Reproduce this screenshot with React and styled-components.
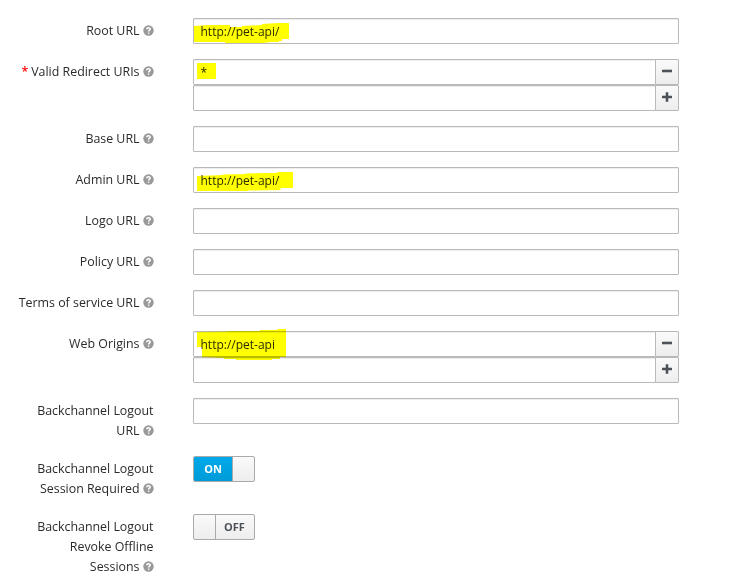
import React from "react";
import styled, { createGlobalStyle, css } from "styled-components";

const Global = createGlobalStyle`
  *, *::before, *::after { box-sizing: border-box; }
  body {
    margin: 0;
    background: #fff;
    color: #2b2b2b;
    font: 12px/20px "Open Sans", "Noto Sans", sans-serif;
    overflow: hidden;
  }
`;

const Form = styled.form`
  display: flex;
  flex-direction: column;
  gap: 15px;
  width: 756px;
  height: 583px;
  padding-top: 18px;
  overflow: hidden;
`;

const Row = styled.div`
  display: grid;
  grid-template-columns: 153.5px 486px;
  column-gap: 39.5px;
  align-items: start;
`;

const Label = styled.label`
  display: flex;
  flex-direction: column;
  align-items: flex-end;
  padding-top: 3px;
  white-space: nowrap;
`;

const Line = styled.span`
  display: flex;
  align-items: center;
  height: 20px;
  font-size: 12.4px;
`;

const Star = styled.span`
  color: #f00;
  font-weight: 600;
  margin-right: 3px;
`;

const Help = styled.svg`
  width: 11px;
  height: 11px;
  margin: 0 0 1px 3px;
`;

const Group = styled.div`
  display: flex;
  height: 26px;
`;

const Field = styled.div`
  position: relative;
  flex: 1;
  height: 26px;
  padding: 3px 7px 0 6.5px;
  border: 1px solid #bababa;
  border-radius: ${(p) => (p.$joined ? "1px 0 0 1px" : "1px")};
  background: #fff;
  box-shadow: inset 0 1px 1px rgba(3, 3, 3, 0.075);
`;

const Marker = styled.svg`
  position: absolute;
  left: -1px;
  top: -6px;
  width: 110px;
  height: 38px;
  mix-blend-mode: multiply;
  pointer-events: none;
  z-index: 1;
`;

const SideButton = styled.button`
  display: flex;
  align-items: center;
  justify-content: center;
  width: 24px;
  height: 26px;
  margin-left: -1px;
  padding: 0 0 2px;
  border: 1px solid #b7b7b7;
  border-radius: 0 1px 1px 0;
  background: linear-gradient(#fafafa, #ededed);
  color: #4d5258;
`;

const Switch = styled.div`
  display: flex;
  width: 62px;
  height: 26px;
  border: 1px solid #aaa;
  border-radius: 2px;
  overflow: hidden;
  background: linear-gradient(#fafafa, #ededed);
`;

const State = styled.span`
  display: flex;
  align-items: center;
  justify-content: center;
  width: 38px;
  font-size: 11px;
  font-weight: 700;
  ${(p) =>
    p.$on
      ? css`
          color: #fff;
          background: linear-gradient(#00a8e9, #009bd8);
        `
      : css`
          color: #4d5258;
          padding-right: 1px;
        `}
`;

const Knob = styled.span`
  flex: 1;
  border-${(p) => (p.$on ? "left" : "right")}: 1px solid #aaa;
`;

const HelpIcon = () => (
  <Help viewBox="0 0 11 11">
    <circle cx="5.5" cy="5.5" r="5.2" fill="#999" />
    <path
      d="M3.7 4.2C3.8 2.1 7.3 2.2 7.2 4.1C7.1 5.2 5.6 5.2 5.6 6.5M5.6 7.5V8.8"
      fill="none"
      stroke="#fff"
      strokeWidth="1.5"
    />
  </Help>
);

const SignIcon = ({ plus }) => (
  <svg width="10" height="10" viewBox="0 0 10 10">
    <path
      d={plus ? "M0 5H10M5 0.3V9.7" : "M0 5H10"}
      stroke="currentColor"
      strokeWidth="2.6"
    />
  </svg>
);

/* Highlighter strokes; y is measured from 5px above the field. */
const marks = {
  root: "1,13 16,12 37,12 37,14 49,14 49,13 69,12 69,11 85,10 96,10 96,26 89,26 89,28 86,28 86,29 78,29 70,30 32,30 32,29 1,29",
  redirect: "4,9 23,9 23,25 4,25",
  admin: "4,14 30,13 30,12.5 53,12 53,11.5 71,11 84,11 84,10 100,10 100,26 88,26 87,28 55,28.5 55,29 4,29",
  origins: "4,6 34,5.5 34,5 67,5 67,4 84,4 84,3 93,3 93,31 87,31 87,33 79,33 79,34 43,34 43,33 31,33 31,32 9,31 9,21 4,21",
};

const rows = [
  { label: ["Root URL"], values: ["http://pet-api/"], mark: "root" },
  { label: ["Valid Redirect URIs"], required: true, multi: true, values: ["*", ""], mark: "redirect" },
  { label: ["Base URL"], values: [""] },
  { label: ["Admin URL"], values: ["http://pet-api/"], mark: "admin" },
  { label: ["Logo URL"], values: [""] },
  { label: ["Policy URL"], values: [""] },
  { label: ["Terms of service URL"], values: [""] },
  { label: ["Web Origins"], multi: true, values: ["http://pet-api", ""], mark: "origins" },
  { label: ["Backchannel Logout", "URL"], values: [""] },
  { label: ["Backchannel Logout", "Session Required"], toggle: "ON" },
  { label: ["Backchannel Logout", "Revoke Offline", "Sessions"], toggle: "OFF" },
];

const Toggle = ({ value }) =>
  value === "ON" ? (
    <Switch>
      <State $on>ON</State>
      <Knob $on />
    </Switch>
  ) : (
    <Switch>
      <Knob />
      <State>OFF</State>
    </Switch>
  );

export default function App() {
  return (
    <>
      <Global />
      <Form>
        {rows.map((row, r) => (
          <Row key={r}>
            <Label>
              {row.label.map((text, i) => (
                <Line key={i}>
                  {row.required && <Star>*</Star>}
                  {text}
                  {i === row.label.length - 1 && <HelpIcon />}
                </Line>
              ))}
            </Label>
            <div>
              {row.toggle && <Toggle value={row.toggle} />}
              {row.values?.map((value, i) => (
                <Group key={i}>
                  <Field $joined={row.multi}>
                    {value}
                    {i === 0 && row.mark && (
                      <Marker viewBox="0 0 110 38">
                        <polygon points={marks[row.mark]} fill="#ff0" />
                      </Marker>
                    )}
                  </Field>
                  {row.multi && (
                    <SideButton type="button">
                      <SignIcon plus={i === 1} />
                    </SideButton>
                  )}
                </Group>
              ))}
            </div>
          </Row>
        ))}
      </Form>
    </>
  );
}
